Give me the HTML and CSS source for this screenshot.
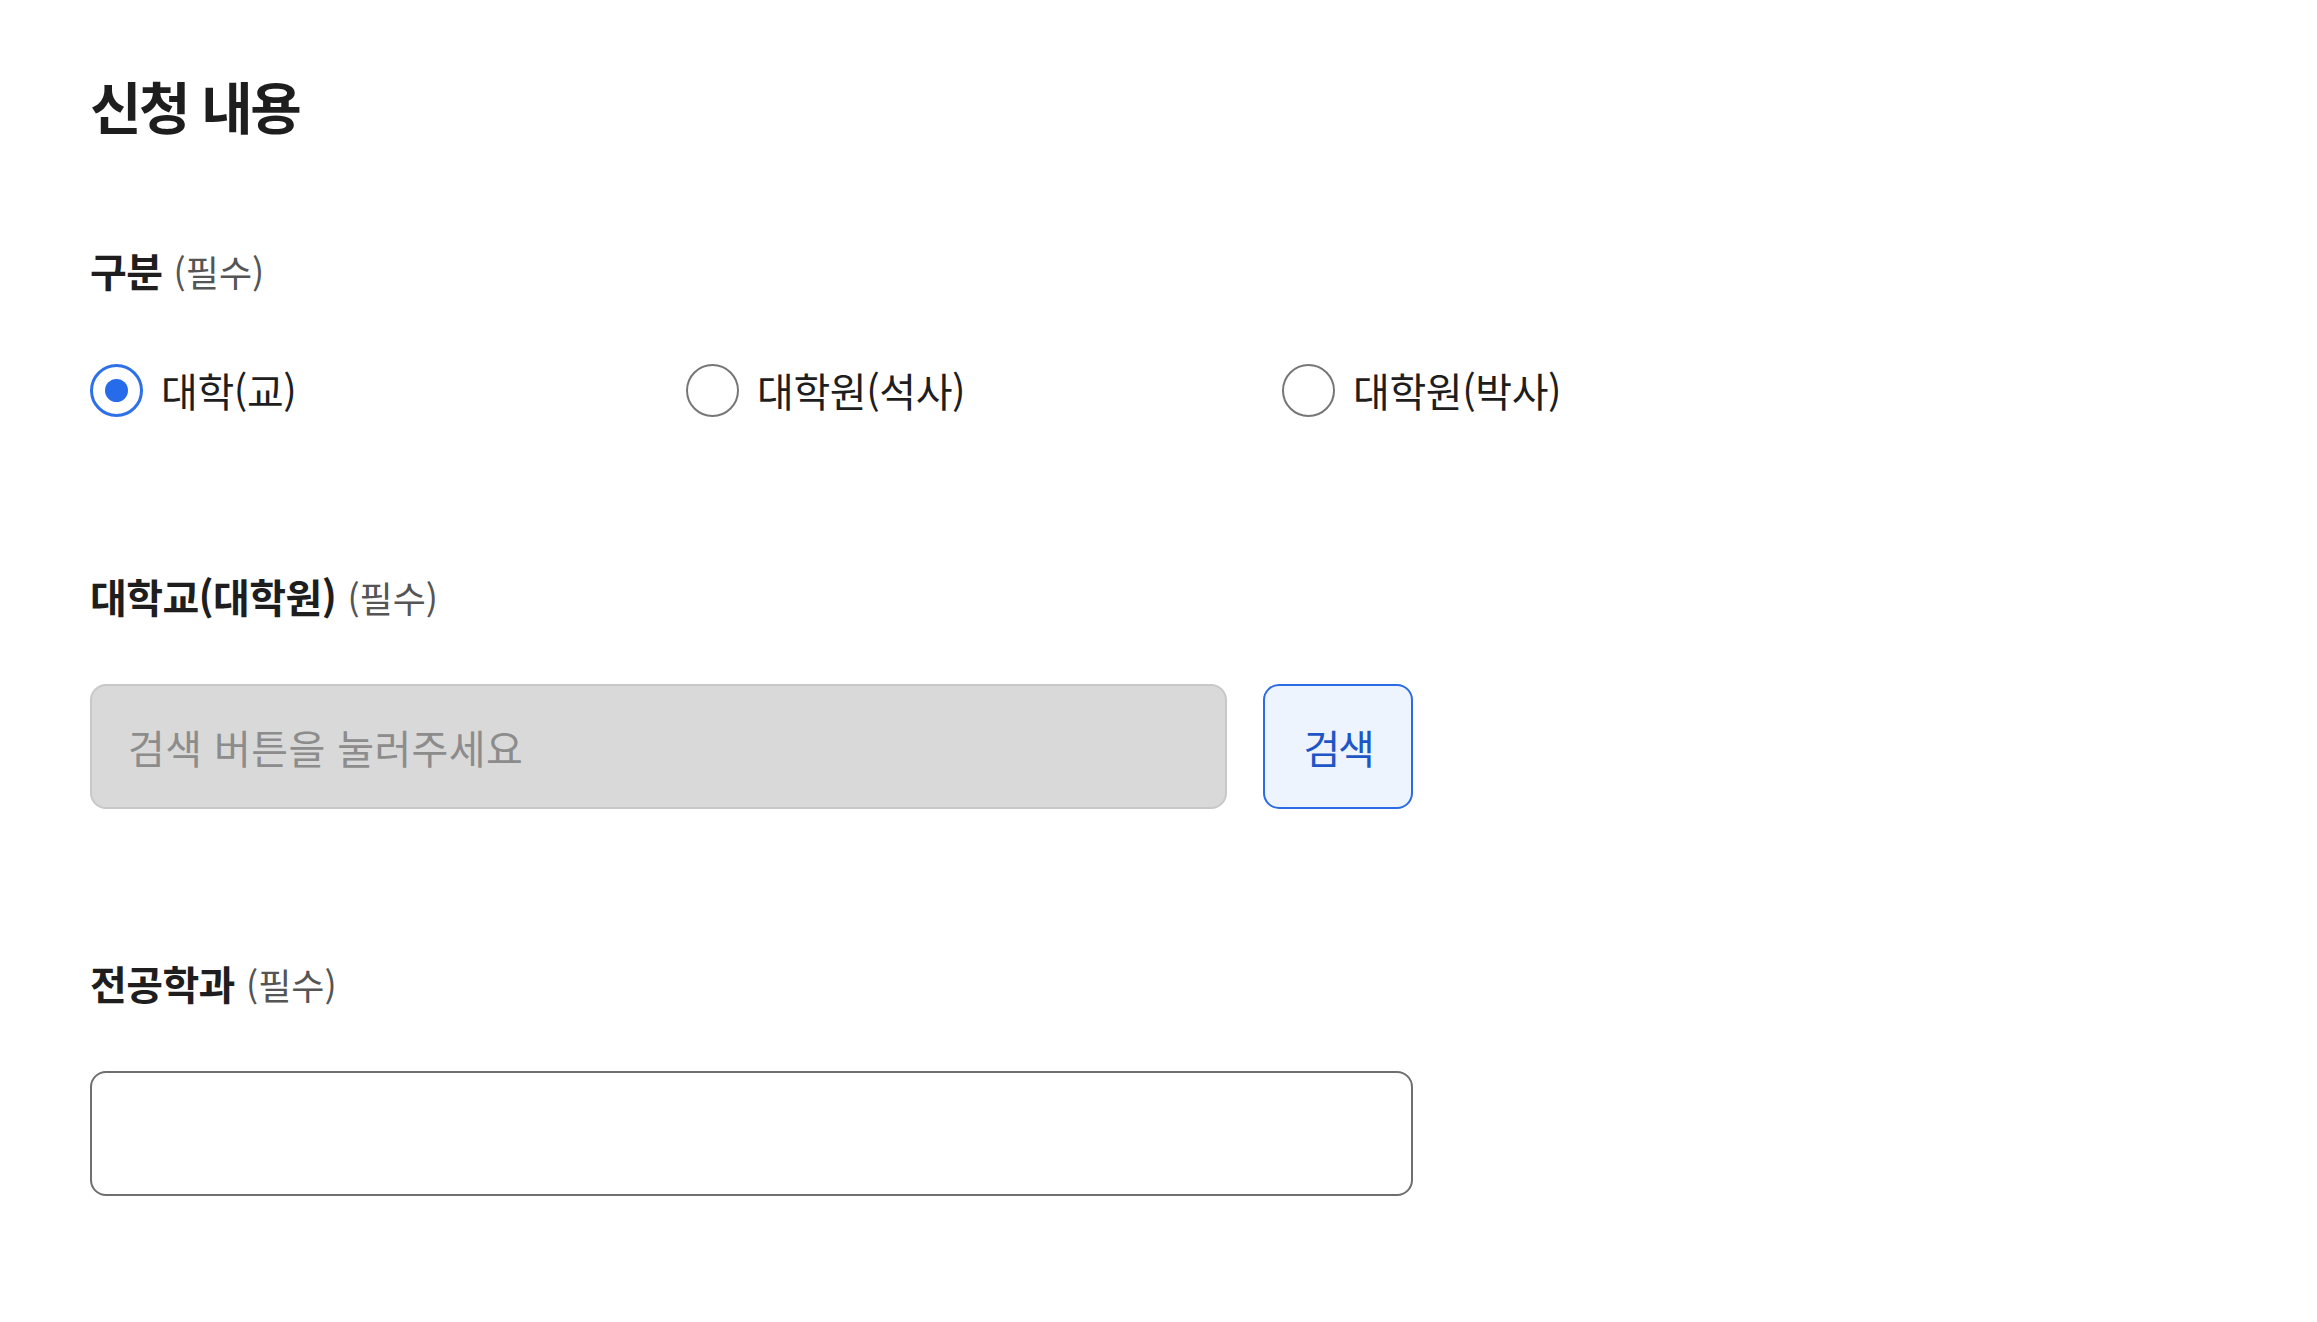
FILE: index.html
```html
<!DOCTYPE html>
<html lang="ko">
<head>
<meta charset="utf-8">
<title>신청 내용</title>
<link rel="stylesheet" href="styles.css">
</head>
<body>
<main class="page">
  <h1 class="title">신청 내용</h1>

  <section class="field field-first">
    <div class="label"><strong>구분</strong> <span class="req">(필수)</span></div>
    <div class="radios">
      <label class="radio"><input type="radio" name="kind" checked><span class="radio-text">대학(교)</span></label>
      <label class="radio"><input type="radio" name="kind"><span class="radio-text">대학원(석사)</span></label>
      <label class="radio"><input type="radio" name="kind"><span class="radio-text">대학원(박사)</span></label>
    </div>
  </section>

  <section class="field field-second">
    <div class="label"><strong>대학교(대학원)</strong> <span class="req">(필수)</span></div>
    <div class="search-row">
      <input class="input input-disabled" type="text" placeholder="검색 버튼을 눌러주세요" readonly>
      <button class="btn-search" type="button">검색</button>
    </div>
  </section>

  <section class="field">
    <div class="label"><strong>전공학과</strong> <span class="req">(필수)</span></div>
    <input class="input input-full" type="text">
  </section>
</main>
</body>
</html>
```

FILE: styles.css
```css
* { box-sizing: border-box; }

html, body {
  margin: 0;
  padding: 0;
  background: #ffffff;
}

body {
  font-family: "Noto Sans CJK KR", "Noto Sans", sans-serif;
  color: #1e1e1e;
}

.page {
  padding: 67px 0 0 90px;
  width: 1500px;
}

.title {
  margin: 0;
  font-size: 56px;
  line-height: 76px;
  font-weight: 700;
  letter-spacing: -0.045em;
  color: #1e1e1e;
}

.field {
  margin-top: 146px;
}

.field-first {
  margin-top: 99px;
}

.field-second {
  margin-top: 150px;
}

.label {
  font-size: 40px;
  line-height: 56px;
  height: 56px;
  margin-bottom: 60px;
  white-space: nowrap;
}

.label strong {
  font-weight: 700;
  letter-spacing: -0.015em;
  color: #1e1e1e;
}

.req {
  font-size: 36px;
  font-weight: 400;
  color: #555555;
  letter-spacing: 0;
}

.field-first .label {
  margin-bottom: 64px;
}

.radios {
  display: grid;
  grid-template-columns: 596px 596px 596px;
  height: 56px;
  align-items: center;
}

.radio {
  display: flex;
  align-items: center;
  gap: 18px;
  cursor: pointer;
}

.radio input {
  appearance: none;
  -webkit-appearance: none;
  margin: 0;
  width: 53px;
  height: 53px;
  border: 2px solid #767676;
  border-radius: 50%;
  background: #ffffff;
  display: grid;
  place-items: center;
  flex: none;
}

.radio input:checked {
  border: 3px solid #2d70e8;
}

.radio input:checked::before {
  content: "";
  width: 23px;
  height: 23px;
  border-radius: 50%;
  background: #266be9;
}

.radio-text {
  font-size: 40px;
  line-height: 56px;
  letter-spacing: -0.01em;
  color: #1e1e1e;
}

.search-row {
  display: flex;
  gap: 36px;
}

.input {
  height: 125px;
  border-radius: 16px;
  font-family: inherit;
  font-size: 40px;
  padding: 0 36px;
  outline: none;
  margin: 0;
  letter-spacing: 0.01em;
}

.input-disabled {
  width: 1137px;
  background: #d9d9d9;
  border: 2px solid #c8c8c8;
  color: #8a8a8a;
}

.input-disabled::placeholder {
  color: #8c8c8c;
  opacity: 1;
}

.input-full {
  display: block;
  width: 1323px;
  background: #ffffff;
  border: 2px solid #6f6f6f;
}

.btn-search {
  width: 150px;
  height: 125px;
  border-radius: 16px;
  border: 2px solid #2b6be3;
  background: #eef4fe;
  color: #1f56c6;
  font-family: inherit;
  font-size: 40px;
  letter-spacing: -0.06em;
  padding: 0;
  cursor: pointer;
}
```
